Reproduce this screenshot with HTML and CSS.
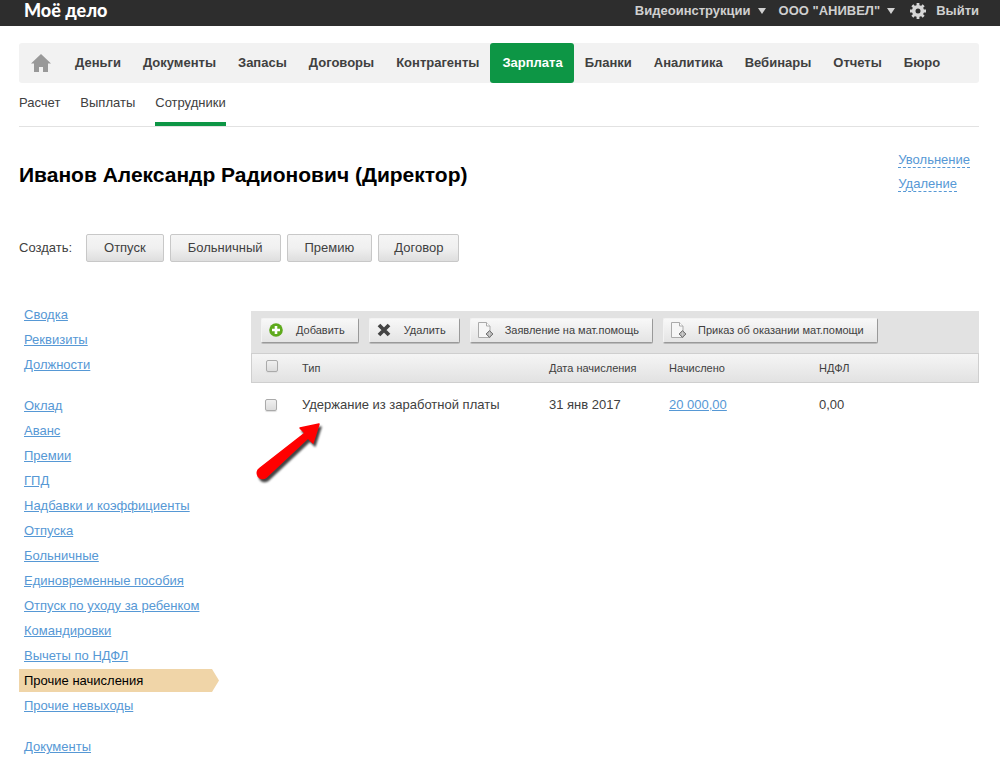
FILE: index.html
```html
<!DOCTYPE html>
<html lang="ru">
<head>
<meta charset="utf-8">
<title>Моё дело — Сотрудники</title>
<link rel="stylesheet" href="styles.css">
</head>
<body>
<header class="topbar">
  <a class="logo" href="#">Моё дело</a>
  <nav class="account" aria-label="Аккаунт">
    <button class="account-item" type="button">Видеоинструкции <span class="caret"></span></button>
    <button class="account-item" type="button">ООО "АНИВЕЛ" <span class="caret"></span></button>
    <button class="account-item gear" type="button" aria-label="Настройки">
      <svg width="16" height="16" viewBox="0 0 16 16"><g fill="#d6d6d6"><path d="M6.600 0h2.800v3H6.600zM6.600 13h2.800v3H6.600zM0 6.600h3v2.800H0zM13 6.600h3v2.800h-3z"/><path d="M6.600 0h2.800v3H6.600zM6.600 13h2.800v3H6.600zM0 6.600h3v2.800H0zM13 6.600h3v2.800h-3z" transform="rotate(45 8 8)"/></g><circle cx="8" cy="8" r="4.300" fill="none" stroke="#d6d6d6" stroke-width="3.600"/></svg>
    </button>
    <a class="account-item" href="#">Выйти</a>
  </nav>
</header>

<div class="page">
  <nav class="mainnav" aria-label="Разделы">
    <a class="home" href="#" aria-label="Главная"><svg width="20" height="18" viewBox="0 0 20 18"><path fill="#999" d="M10 0l10 9.500h-3V18h-5v-5H8v5H3V9.500H0z"/></svg></a>
    <a href="#">Деньги</a>
    <a href="#">Документы</a>
    <a href="#">Запасы</a>
    <a href="#">Договоры</a>
    <a href="#">Контрагенты</a>
    <a class="current" href="#">Зарплата</a>
    <a href="#">Бланки</a>
    <a href="#">Аналитика</a>
    <a href="#">Вебинары</a>
    <a href="#">Отчеты</a>
    <a href="#">Бюро</a>
  </nav>
  <nav class="subnav" aria-label="Зарплата">
    <a href="#">Расчет</a>
    <a href="#">Выплаты</a>
    <a class="current" href="#">Сотрудники</a>
  </nav>

  <section class="person">
    <h1>Иванов Александр Радионович (Директор)</h1>
    <div class="person-actions">
      <a href="#">Увольнение</a>
      <a href="#">Удаление</a>
    </div>
  </section>

  <div class="create">
    <span class="create-label">Создать:</span>
    <button type="button">Отпуск</button>
    <button type="button">Больничный</button>
    <button type="button">Премию</button>
    <button class="narrow" type="button">Договор</button>
  </div>

  <div class="columns">
    <nav class="side" aria-label="Сотрудник">
      <ul>
        <li><a href="#">Сводка</a></li>
        <li><a href="#">Реквизиты</a></li>
        <li><a href="#">Должности</a></li>
      </ul>
      <ul>
        <li><a href="#">Оклад</a></li>
        <li><a href="#">Аванс</a></li>
        <li><a href="#">Премии</a></li>
        <li><a href="#">ГПД</a></li>
        <li><a href="#">Надбавки и коэффициенты</a></li>
        <li><a href="#">Отпуска</a></li>
        <li><a href="#">Больничные</a></li>
        <li><a href="#">Единовременные пособия</a></li>
        <li><a href="#">Отпуск по уходу за ребенком</a></li>
        <li><a href="#">Командировки</a></li>
        <li><a href="#">Вычеты по НДФЛ</a></li>
        <li class="selected"><a href="#">Прочие начисления</a></li>
        <li><a href="#">Прочие невыходы</a></li>
      </ul>
      <ul>
        <li><a href="#">Документы</a></li>
      </ul>
    </nav>

    <main class="content">
      <div class="toolbar">
        <button type="button"><svg class="tool-icon" width="18" height="18" viewBox="0 0 18 18"><circle cx="8" cy="9" r="6.800" fill="#5eaa1c"/><path d="M8 5v8M4 9h8" stroke="#fff" stroke-width="2.600"/></svg>Добавить</button>
        <button type="button"><svg class="tool-icon" width="18" height="18" viewBox="0 0 18 18"><path d="M3 4l10 10M13 4L3 14" stroke="#444" stroke-width="3.800"/></svg>Удалить</button>
        <button type="button"><svg class="tool-icon" width="18" height="18" viewBox="0 0 18 18"><path d="M1.500 1.500h8l3.500 3.500v11.500H1.500z" fill="#f6f6f6" stroke="#aaa"/><path d="M9.500 1.500V5H13" fill="#fff" stroke="#aaa"/><path d="M12.500 9.500l3.500 3.500-3.500 3.500L9 13z" fill="#aaa" stroke="#777"/><path d="M12.500 11v4M10.500 13h4" stroke="#ccc"/></svg>Заявление на мат.помощь</button>
        <button type="button"><svg class="tool-icon" width="18" height="18" viewBox="0 0 18 18"><path d="M1.500 1.500h8l3.500 3.500v11.500H1.500z" fill="#f6f6f6" stroke="#aaa"/><path d="M9.500 1.500V5H13" fill="#fff" stroke="#aaa"/><path d="M12.500 9.500l3.500 3.500-3.500 3.500L9 13z" fill="#aaa" stroke="#777"/><path d="M12.500 11v4M10.500 13h4" stroke="#ccc"/></svg>Приказ об оказании мат.помощи</button>
      </div>
      <table class="accruals">
        <colgroup><col class="col-check"><col class="col-type"><col class="col-date"><col class="col-sum"><col></colgroup>
        <thead>
          <tr>
            <th class="check"><input type="checkbox" aria-label="Выбрать все"></th>
            <th>Тип</th><th>Дата начисления</th><th>Начислено</th><th>НДФЛ</th>
          </tr>
        </thead>
        <tbody>
          <tr>
            <td class="check"><input type="checkbox" aria-label="Выбрать строку"></td>
            <td>Удержание из заработной платы</td><td>31 янв 2017</td><td><a href="#">20 000,00</a></td><td>0,00</td>
          </tr>
        </tbody>
      </table>
      <svg class="pointer" width="76" height="66" viewBox="0 0 76 66" aria-hidden="true"><path d="M8.500 48.500L54 13l-5-5 19-4-6 19-5-5L15 57.500a5.200 5.200 0 1 1-6.500-9z" fill="#f00" stroke="#f00" stroke-width="1.500" stroke-linejoin="round"/></svg>
    </main>
  </div>
</div>
</body>
</html>
```
FILE: styles.css
```css
* { box-sizing: border-box; }

body {
  margin: 0;
  background: #fff;
  color: #404040;
  font: 13px/16px "Liberation Sans", Arial, sans-serif;
}

a { color: #5698d5; }
button { font: inherit; color: inherit; cursor: pointer; }

.topbar {
  display: flex;
  justify-content: space-between;
  height: 26px;
  padding: 0 21px 0 24px;
  background: #2d2d2d;
}
.logo {
  color: #fff;
  font: 900 18px/21px Lato, "Liberation Sans", sans-serif;
  text-decoration: none;
}
.account {
  display: flex;
  align-items: center;
  gap: 13px;
  height: 22px;
}
.account-item {
  display: flex;
  align-items: center;
  gap: 7px;
  padding: 0;
  border: 0;
  background: none;
  color: #d0d0d0;
  font-weight: bold;
  text-decoration: none;
}
.gear { margin: 0 -3px 0 2px; }
.caret {
  border: 4px solid transparent;
  border-top: 6px solid #d0d0d0;
  border-bottom: 0;
}

.page { padding: 17px 21px 12px 19px; }

.mainnav {
  display: flex;
  height: 40px;
  border-radius: 3px;
  background: #f2f2f2;
}
.mainnav a {
  padding: 0 11px;
  color: #404040;
  font-weight: bold;
  line-height: 40px;
  text-decoration: none;
}
.mainnav .home {
  display: flex;
  align-items: center;
  padding: 0 13px 0 12px;
}
.mainnav .current {
  padding: 0 11px 0 12px;
  border-radius: 3px;
  background: #0d9645;
  color: #fff;
}

.subnav {
  display: flex;
  gap: 20px;
  border-bottom: 1px solid #e2e2e2;
}
.subnav a {
  padding: 12px 0 15px;
  color: #404040;
  text-decoration: none;
}
.subnav .current {
  padding-bottom: 11px;
  border-bottom: 4px solid #0d9645;
}

.person {
  display: flex;
  justify-content: space-between;
  padding-top: 22px;
}
h1 {
  margin: 13px 0 0;
  color: #000;
  font-size: 21px;
  line-height: 26px;
}
.person-actions {
  display: flex;
  flex-direction: column;
  align-items: flex-start;
  gap: 8px;
  padding: 3px 9px 0 0;
  line-height: 15px;
}
.person-actions a {
  border-bottom: 1px dashed;
  text-decoration: none;
}

.create {
  display: flex;
  align-items: center;
  gap: 6px;
  margin-top: 42px;
}
.create-label { margin-right: 8px; }
.create button {
  height: 28px;
  padding: 0 17px;
  border: 1px solid #c8c8c8;
  border-radius: 2px;
  background: linear-gradient(#f5f5f5, #f0f0f0 50%, #dedede);
}
.create .narrow { padding: 0 15px; }

.columns {
  display: flex;
  gap: 32px;
  margin-top: 41px;
}

.side {
  flex: none;
  width: 200px;
}
.side ul {
  margin: 0 0 16px;
  padding: 0;
  list-style: none;
}
.side li {
  height: 25px;
  padding: 4px 5px;
}
.side .selected {
  height: 23px;
  margin-bottom: 2px;
  background: #f0d5a8;
  clip-path: polygon(0 0, 193px 0, 100% 50%, 193px 100%, 0 100%);
}
.side .selected a {
  color: #000;
  text-decoration: none;
}

.content {
  position: relative;
  flex: 1;
  margin-top: 8px;
}
.toolbar {
  display: flex;
  gap: 10px;
  padding: 7px 10px 10px;
  background: #e2e2e2;
}
.toolbar button {
  display: flex;
  align-items: center;
  gap: 10px;
  height: 25px;
  padding: 0 13px 1px 6px;
  border: 1px solid #f3f3f3;
  border-right-color: #999;
  border-bottom-color: #999;
  border-radius: 2px;
  background: linear-gradient(#f8f8f8, #e4e4e4);
  box-shadow: 0 1px 0 #bbb;
  font-size: 11px;
}

.accruals {
  width: 100%;
  border-collapse: separate;
  border-spacing: 0;
  table-layout: fixed;
}
.col-check { width: 51px; }
.col-type { width: 247px; }
.col-date { width: 120px; }
.col-sum { width: 150px; }
.accruals th {
  height: 30px;
  padding: 0;
  border: solid #cfcfcf;
  border-width: 1px 0;
  background: linear-gradient(#f5f5f5, #e2e2e2);
  font-size: 11px;
  font-weight: normal;
  text-align: left;
}
.accruals th:first-child { border-left-width: 1px; }
.accruals th:last-child { border-right-width: 1px; }
.accruals td {
  height: 43px;
  padding: 0;
}
.accruals .check { padding-left: 14px; }
.accruals th.check { padding-bottom: 4px; }
.accruals input {
  display: block;
  appearance: none;
  width: 12px;
  height: 12px;
  margin: 0;
  border: 1px solid #aaa;
  border-radius: 2px;
  background: linear-gradient(#f0f0f0, #dcdcdc);
  box-shadow: 0 1px 1px #ddd;
}
.accruals input:checked { background: #5698d5; }

.pointer {
  position: absolute;
  top: 109px;
  left: 0;
  filter: drop-shadow(2px 3px 1px #444);
}
```
